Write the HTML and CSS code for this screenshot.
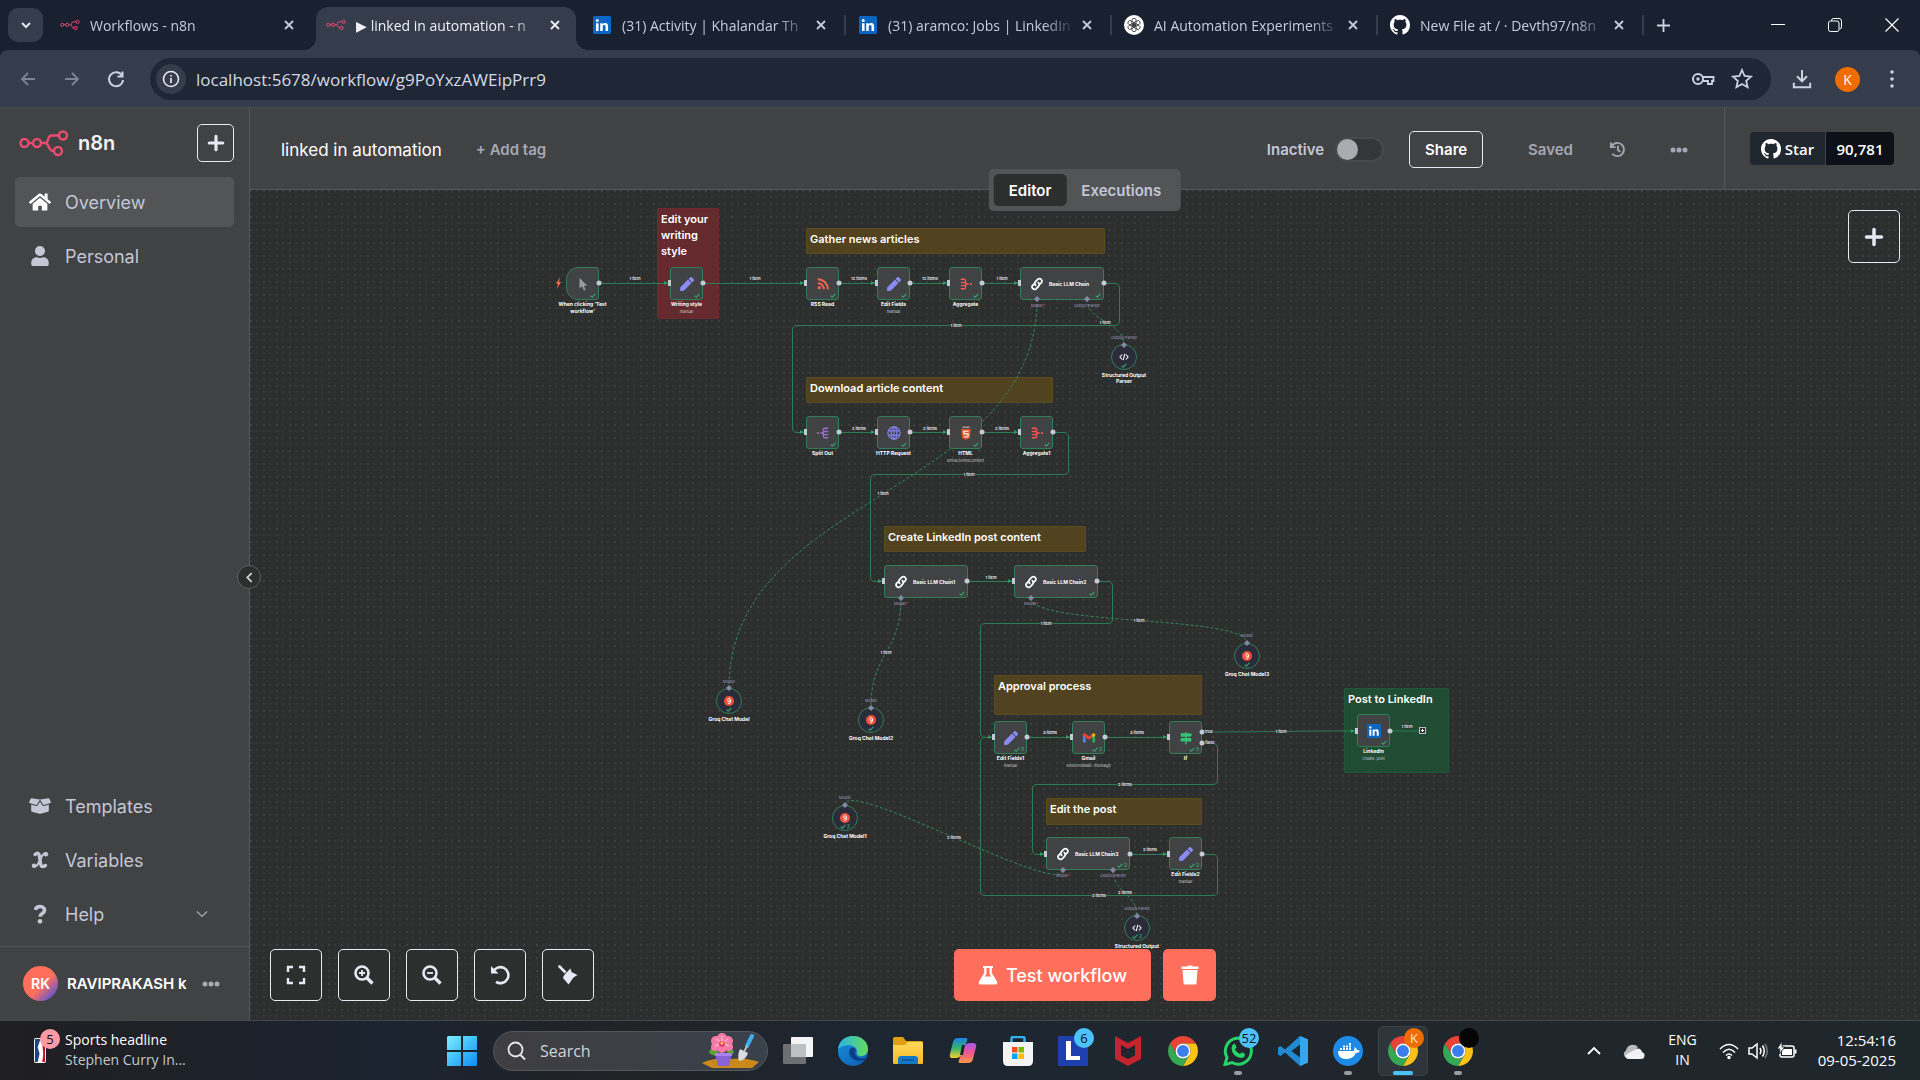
FILE: index.html
```html
<!DOCTYPE html>
<html lang="en">
<head>
<meta charset="utf-8">
<meta name="viewport" content="width=device-width, initial-scale=1">
<title>linked in automation - n8n</title>
<link rel="stylesheet" href="styles.css">
</head>
<body>
<svg class="sprite" aria-hidden="true">
  <defs>
    <linearGradient id="g-win" x1="0" y1="0" x2="1" y2="1"><stop offset="0" stop-color="#7df0ff"/><stop offset="1" stop-color="#0a8cf5"/></linearGradient>
    <linearGradient id="g-edge" x1="0" y1="0" x2="1" y2="0"><stop offset="0" stop-color="#2bb3e6"/><stop offset="1" stop-color="#62dc5c"/></linearGradient>
    <linearGradient id="g-edge2" x1="0" y1="0" x2="1" y2="1"><stop offset="0" stop-color="#1a90dc"/><stop offset="1" stop-color="#0b5bb0"/></linearGradient>
    <linearGradient id="g-folder" x1="0" y1="0" x2="0" y2="1"><stop offset="0" stop-color="#ffd95a"/><stop offset="1" stop-color="#f9b825"/></linearGradient>
    <linearGradient id="g-cop1" x1="0" y1="0" x2="0" y2="1"><stop offset="0" stop-color="#1e7fe8"/><stop offset=".5" stop-color="#35b36d"/><stop offset="1" stop-color="#f7cf2c"/></linearGradient>
    <linearGradient id="g-cop2" x1="0" y1="0" x2="0" y2="1"><stop offset="0" stop-color="#a559ee"/><stop offset=".5" stop-color="#f2578c"/><stop offset="1" stop-color="#fb9a45"/></linearGradient>
    <symbol id="n8n" viewBox="0 0 50 27"><g fill="none" stroke="#ea4b71" stroke-width="2.400"><circle cx="5.500" cy="13" r="4"/><circle cx="18" cy="13" r="4"/><circle cx="44" cy="5.500" r="4"/><circle cx="39" cy="21" r="4"/><path d="M9.500 13H14M22 13H26C31 13 27 5.500 33 5.500H40M26 13C31 13 28 21 35 21"/></g></symbol>
    <symbol id="linkedin" viewBox="0 0 24 24"><rect width="24" height="24" rx="2" fill="#0a66c2"/><path fill="#fff" d="M4 9.500h3.400V20H4zM5.700 4a2 2 0 1 1 0 4 2 2 0 0 1 0-4zM9.600 9.500h3.200V11c.6-1 1.700-1.800 3.300-1.800 3.300 0 4 2.200 4 5V20h-3.400v-5.200c0-1.300 0-2.800-1.700-2.800S13 13.300 13 14.700V20H9.600z"/></symbol>
    <symbol id="github" viewBox="0 0 16 16"><path fill="currentColor" d="M8 0C3.580 0 0 3.580 0 8c0 3.540 2.290 6.530 5.470 7.590.4.070.55-.17.55-.38 0-.19-.01-.82-.01-1.490-2.010.37-2.530-.49-2.690-.94-.09-.23-.48-.94-.82-1.130-.28-.15-.68-.52-.01-.53.63-.01 1.080.58 1.230.82.72 1.210 1.870.87 2.330.66.070-.52.28-.87.51-1.070-1.780-.2-3.640-.89-3.640-3.950 0-.87.31-1.590.82-2.150-.08-.2-.36-1.020.08-2.120 0 0 .67-.21 2.200.82.64-.18 1.320-.27 2-.27s1.360.09 2 .27c1.530-1.040 2.200-.82 2.200-.82.44 1.100.16 1.920.08 2.120.51.56.82 1.270.82 2.150 0 3.070-1.870 3.750-3.650 3.950.29.25.54.73.54 1.480 0 1.070-.01 1.930-.01 2.200 0 .21.15.46.55.38A8.010 8.010 0 0 0 16 8c0-4.420-3.580-8-8-8z"/></symbol>
    <symbol id="gpt" viewBox="0 0 24 24"><circle cx="12" cy="12" r="12" fill="#fff"/><g fill="none" stroke="#333" stroke-width="1"><rect id="lobe" x="9.500" y="4" width="5" height="9" rx="2.500"/><use href="#lobe" transform="rotate(60 12 12)"/><use href="#lobe" transform="rotate(120 12 12)"/><use href="#lobe" transform="rotate(180 12 12)"/><use href="#lobe" transform="rotate(240 12 12)"/><use href="#lobe" transform="rotate(300 12 12)"/></g></symbol>
    <symbol id="x" viewBox="0 0 18 18"><path d="M5 5l8 8M13 5l-8 8" stroke="currentColor" stroke-width="1.800" fill="none"/></symbol>
    <symbol id="plus" viewBox="0 0 16 16"><path d="M8 2V14M2 8H14" stroke="currentColor" stroke-width="2.800" stroke-linecap="round" fill="none"/></symbol>
    <symbol id="dots" viewBox="0 0 18 6"><g fill="currentColor"><circle cx="3" cy="3" r="2.500"/><circle cx="9" cy="3" r="2.500"/><circle cx="15" cy="3" r="2.500"/></g></symbol>
    <symbol id="home" viewBox="0 0 576 512"><path fill="currentColor" d="M280.370 148.260L96 300.110V464a16 16 0 0 0 16 16l112.060-.29a16 16 0 0 0 15.920-16V368a16 16 0 0 1 16-16h64a16 16 0 0 1 16 16v95.640a16 16 0 0 0 16 16.050L464 480a16 16 0 0 0 16-16V300L295.670 148.260a12.190 12.190 0 0 0-15.300 0zM571.600 251.470L488 182.560V44.050a12 12 0 0 0-12-12h-56a12 12 0 0 0-12 12v72.610L318.470 43a48 48 0 0 0-61 0L4.340 251.470a12 12 0 0 0-1.600 16.900l25.500 31A12 12 0 0 0 45.150 301l235.220-193.740a12.190 12.190 0 0 1 15.300 0L530.900 301a12 12 0 0 0 16.900-1.600l25.500-31a12 12 0 0 0-1.700-16.930z"/></symbol>
    <symbol id="user" viewBox="0 0 448 512"><path fill="currentColor" d="M224 256c70.700 0 128-57.300 128-128S294.700 0 224 0 96 57.300 96 128s57.300 128 128 128zm89.600 32h-16.700c-22.200 10.200-46.900 16-72.900 16s-50.600-5.800-72.900-16h-16.700C60.200 288 0 348.200 0 422.400V464c0 26.500 21.500 48 48 48h352c26.500 0 48-21.500 48-48v-41.600c0-74.200-60.200-134.400-134.400-134.400z"/></symbol>
    <symbol id="box" viewBox="0 0 640 512"><path fill="currentColor" d="M425.700 256c-16.900 0-32.800-9-41.400-23.400L320 126l-64.200 106.600c-8.700 14.500-24.600 23.500-41.500 23.500-4.500 0-9-.6-13.300-1.900L64 215v178c0 14.700 10 27.500 24.200 31l216.200 54.100c10.200 2.500 20.900 2.500 31 0L551.800 424c14.200-3.600 24.200-16.400 24.200-31V215l-137 39.100c-4.300 1.300-8.800 1.900-13.300 1.900zm212.600-112.200L586.800 41c-3.100-6.200-9.800-9.800-16.700-8.900L320 64l91.700 152.100c3.800 6.300 11.400 9.300 18.500 7.300l197.900-56.500c9.900-2.900 14.700-13.900 10.200-23.100zM53.200 41L1.700 143.800c-4.600 9.200.3 20.200 10.100 23l197.900 56.500c7.100 2 14.700-1 18.500-7.300L320 64 69.800 32.100c-6.900-.8-13.500 2.700-16.600 8.900z"/></symbol>
    <symbol id="varx" viewBox="0 0 20 20"><path fill="none" stroke="currentColor" stroke-width="3.400" stroke-linecap="round" d="M5 4.500C9 1 9.500 5 10 10S11 18.500 15.500 15.500"/><path fill="none" stroke="currentColor" stroke-width="2.200" stroke-linecap="round" d="M16 3.500C12.500 3 11.500 7 10 10S7.500 17 4 16.500"/><circle cx="16" cy="4.200" r="2.200" fill="currentColor"/><circle cx="4" cy="15.800" r="2.200" fill="currentColor"/></symbol>
    <symbol id="help" viewBox="0 0 20 22"><path d="M5 6.500C6 1.500 15 1.500 15 7 15 10.500 10 10.500 10 14" fill="none" stroke="currentColor" stroke-width="4"/><circle cx="10" cy="19" r="2.600" fill="currentColor"/></symbol>
    <symbol id="pen" viewBox="0 0 512 512"><path fill="#8b8bf5" d="M290.740 93.240l128.020 128.020-277.990 277.990-114.140 12.600C11.350 513.540-1.560 500.620.14 485.340l12.700-114.220 277.900-277.880zm207.200-19.060l-60.110-60.110c-18.750-18.750-49.160-18.750-67.910 0l-56.550 56.550 128.020 128.020 56.550-56.550c18.750-18.760 18.750-49.160 0-67.910z"/></symbol>
    <symbol id="cursor" viewBox="0 0 16 16"><path fill="#9a9b9e" d="M4 1V13L7 10.500 9 15.500 11 14.500 9 10H13Z"/></symbol>
    <symbol id="rss" viewBox="0 0 16 16"><g fill="none" stroke="#f4694f" stroke-width="2.200"><path d="M2 7A7 7 0 0 1 9 14M2 2.500A11.500 11.500 0 0 1 13.500 14"/></g><circle cx="3.800" cy="12.200" r="1.900" fill="#f4694f"/></symbol>
    <symbol id="agg" viewBox="0 0 16 16"><g fill="none" stroke="#f4594f" stroke-width="1.600"><path d="M2 2.500H6Q7.500 2.500 7.500 4V12Q7.500 13.500 6 13.500H2M2 6.200H7M2 9.800H7M8 8H11M12.500 8H15"/></g></symbol>
    <symbol id="split" viewBox="0 0 16 16"><g fill="none" stroke="#9b6dd5" stroke-width="1.600"><path d="M14 2.500H10Q8.500 2.500 8.500 4V12Q8.500 13.500 10 13.500H14M14 6.200H9M14 9.800H9M8 8H5M3.500 8H1"/></g></symbol>
    <symbol id="globe" viewBox="0 0 16 16"><g fill="none" stroke="#8582f0" stroke-width="1.300"><circle cx="8" cy="8" r="7"/><ellipse cx="8" cy="8" rx="3.200" ry="7"/><path d="M8 1V15M1.500 5.500H14.500M1.500 10.500H14.500"/></g></symbol>
    <symbol id="html5" viewBox="0 0 16 16"><path fill="#e65127" d="M2.500 3.500H13.500L12.500 14 8 15.800 3.500 14Z"/><path fill="#f4ded6" d="M4 .8h8v1H4z"/><path d="M11 6H5.500L5.800 9H10.500L10.200 12 8 12.800 5.800 12" fill="none" stroke="#fff" stroke-width="1.300"/></symbol>
    <symbol id="link" viewBox="0 0 16 16"><g fill="none" stroke="#fff" stroke-width="2" stroke-linecap="round"><path d="M6.500 9.500C5 8 5.200 6.500 6.300 5.300L9 2.500C11.500.5 15 3.500 13 6.500L11.500 8"/><path d="M9.500 6.500C11 8 10.800 9.500 9.700 10.700L7 13.500C4.500 15.500 1 12.500 3 9.500L4.500 8"/></g></symbol>
    <symbol id="gmail" viewBox="0 0 16 16"><path fill="#4285f4" d="M1 4V13H4.200V6Z"/><path fill="#34a853" d="M15 4V13H11.800V6Z"/><path fill="#ea4335" d="M1 3.500Q2.500 2 4.200 3.200L8 6.200 11.800 3.200V7L8 10 1 5Z"/><path fill="#fbbc04" d="M11.800 3.200Q13.500 2 15 3.500V5L11.800 7.300Z"/></symbol>
    <symbol id="signs" viewBox="0 0 16 16"><g fill="#36c275"><path d="M7.200 1H8.800V15H7.200z"/><path d="M2 2.500H13L15 4.500 13 6.500H2zM14 8H3L1 10 3 12H14z"/></g></symbol>
    <symbol id="code" viewBox="0 0 16 16"><path fill="none" stroke="#fff" stroke-width="1.700" d="M5 4L1.500 8 5 12M11 4L14.500 8 11 12M9.300 3L6.700 13"/></symbol>
    <symbol id="groq" viewBox="0 0 16 16"><circle cx="8" cy="8" r="8" fill="#f0533c"/><circle cx="8" cy="6.500" r="2.300" fill="none" stroke="#fff" stroke-width="1.400"/><path d="M10.300 6.500V9.500Q10 12 8 12 6.500 12 5.800 10.800" fill="none" stroke="#fff" stroke-width="1.400"/></symbol>
    <symbol id="tick" viewBox="0 0 6 5"><path d="M.6 2.600L2.200 4.200 5.400.8" fill="none" stroke="#31a76a" stroke-width="1.100"/></symbol>
    <symbol id="chrome" viewBox="0 0 48 48"><path fill="#ea4335" d="M24 12H44.780A24 24 0 0 0 3.220 12L13.610 30A12 12 0 0 1 24 12Z"/><path fill="#fbc116" d="M34.390 30L24 48A24 24 0 0 0 44.780 12H24A12 12 0 0 1 34.390 30Z"/><path fill="#34a853" d="M13.610 30L3.220 12A24 24 0 0 0 24 48L34.390 30A12 12 0 0 1 13.610 30Z"/><circle cx="24" cy="24" r="12" fill="#fff"/><circle cx="24" cy="24" r="9.500" fill="#3b7ded"/></symbol>
    <g id="in"><rect x="-2" y="-3" width="3" height="6" fill="#c3c9d5"/><path d="M-6-2L-2 0-6 2Z" fill="#2a9c62"/></g>
    <circle id="out" r="2.500" fill="#c3c9d5"/>
    <path id="dia" d="M0-3L3 0 0 3-3 0Z" fill="#8688a3"/>
  </defs>
</svg>

<header class="browser">
  <div class="tabstrip">
    <button class="tabsearch" aria-label="Search tabs"><svg viewBox="0 0 12 12"><path d="M2 4L6 8 10 4" fill="none" stroke="#dfe5ee" stroke-width="2"/></svg></button>
    <div class="tab nosep"><svg class="fav"><use href="#n8n"/></svg><span>Workflows - n8n</span><button aria-label="Close tab"><svg><use href="#x"/></svg></button></div>
    <div class="tab active nosep"><svg class="fav"><use href="#n8n"/></svg><span>▶ linked in automation - n</span><button aria-label="Close tab"><svg><use href="#x"/></svg></button></div>
    <div class="tab"><svg class="fav small"><use href="#linkedin"/></svg><span>(31) Activity | Khalandar Th</span><button aria-label="Close tab"><svg><use href="#x"/></svg></button></div>
    <div class="tab"><svg class="fav small"><use href="#linkedin"/></svg><span>(31) aramco: Jobs | LinkedIn</span><button aria-label="Close tab"><svg><use href="#x"/></svg></button></div>
    <div class="tab"><svg class="fav"><use href="#gpt"/></svg><span>AI Automation Experiments</span><button aria-label="Close tab"><svg><use href="#x"/></svg></button></div>
    <div class="tab"><svg class="fav"><use href="#github"/></svg><span>New File at / · Devth97/n8n</span><button aria-label="Close tab"><svg><use href="#x"/></svg></button></div>
    <button class="newtab" aria-label="New tab"><svg viewBox="0 0 14 14"><path d="M7 0V14M0 7H14" stroke="#c9d3e0" stroke-width="2"/></svg></button>
    <div class="winbtns">
      <button aria-label="Minimize"><svg viewBox="0 0 14 14"><path d="M0 6.500H14" stroke="#fff"/></svg></button>
      <button aria-label="Restore"><svg viewBox="0 0 14 14"><path d="M3.500 3V2.500Q3.500.5 5.500.5H11Q13.500.5 13.500 3V9Q13.500 11 11.500 11" fill="none" stroke="#fff"/><rect x=".5" y="3" width="10.500" height="10.500" rx="2" fill="none" stroke="#fff"/></svg></button>
      <button aria-label="Close window"><svg viewBox="0 0 14 14"><path d="M.5.5L13.500 13.500M13.500.5L.5 13.500" stroke="#fff" stroke-width="1.200"/></svg></button>
    </div>
  </div>
  <div class="toolbar">
    <button class="dim" aria-label="Back"><svg viewBox="0 0 20 20"><path d="M17 10H4M10 4L4 10 10 16" fill="none" stroke="currentColor" stroke-width="1.800"/></svg></button>
    <button class="dim" aria-label="Forward"><svg viewBox="0 0 20 20"><path d="M3 10H16M10 4L16 10 10 16" fill="none" stroke="currentColor" stroke-width="1.800"/></svg></button>
    <button aria-label="Reload"><svg viewBox="0 0 20 20"><path d="M16 6.500A7 7 0 1 0 17 11M16.500 2.500V7.500H11.500" fill="none" stroke="currentColor" stroke-width="2"/></svg></button>
    <div class="omnibox">
      <button class="info" aria-label="Site information"><svg viewBox="0 0 18 18"><circle cx="9" cy="9" r="7.500" fill="none" stroke="#e3e8f0" stroke-width="1.600"/><path d="M9 8V13M9 5V6.500" stroke="#e3e8f0" stroke-width="1.700"/></svg></button>
      <input type="text" aria-label="Address" value="localhost:5678/workflow/g9PoYxzAWEipPrr9">
      <button aria-label="Passwords"><svg viewBox="0 0 24 24"><circle cx="7" cy="12" r="5" fill="none" stroke="currentColor" stroke-width="2"/><circle cx="7" cy="12" r="1.700" fill="currentColor"/><path d="M11.500 10H22.500V14H21V17H17V14H12" fill="none" stroke="currentColor" stroke-width="1.800"/></svg></button>
      <button aria-label="Bookmark"><svg viewBox="0 0 24 24"><path d="M12 3L14.600 9 21 9.600 16.200 13.900 17.600 20.300 12 17 6.400 20.300 7.800 13.900 3 9.600 9.400 9Z" fill="none" stroke="currentColor" stroke-width="1.800"/></svg></button>
    </div>
    <button class="dl" aria-label="Downloads"><svg viewBox="0 0 22 22"><path d="M11 1V13M5.500 8L11 13.500 16.500 8M2 15V20H20V15" fill="none" stroke="currentColor" stroke-width="2.200"/></svg></button>
    <button class="profile" aria-label="Profile">K</button>
    <button class="kebab" aria-label="Menu"><svg viewBox="0 0 20 20"><g fill="currentColor"><circle cx="10" cy="3" r="1.800"/><circle cx="10" cy="10" r="1.800"/><circle cx="10" cy="17" r="1.800"/></g></svg></button>
  </div>
</header>

<div class="app">
  <aside class="sidebar">
    <div class="brand"><svg class="logo"><use href="#n8n"/></svg><b>n8n</b><button class="ghost" aria-label="Create"><svg><use href="#plus"/></svg></button></div>
    <nav>
      <a href="#overview" class="current"><svg><use href="#home"/></svg>Overview</a>
      <a href="#personal"><svg><use href="#user"/></svg>Personal</a>
    </nav>
    <nav class="lower">
      <a href="#templates"><svg><use href="#box"/></svg>Templates</a>
      <a href="#variables"><svg><use href="#varx"/></svg>Variables</a>
      <a href="#help"><svg><use href="#help"/></svg>Help<svg class="chev" viewBox="0 0 12 8"><path d="M1 1.500L6 6.500 11 1.500" fill="none" stroke="#a9abb0" stroke-width="1.200"/></svg></a>
    </nav>
    <div class="me"><span class="avatar">RK</span><span class="name">RAVIPRAKASH k</span><button aria-label="User menu"><svg><use href="#dots"/></svg></button></div>
    <button class="collapse" aria-label="Collapse sidebar"><svg viewBox="0 0 10 10"><path d="M7 1L3 5 7 9" fill="none" stroke="#d5d7dc" stroke-width="1.600"/></svg></button>
  </aside>

  <main>
    <div class="topbar">
      <h1>linked in automation</h1>
      <button class="addtag">+ Add tag</button>
      <label class="toggle">Inactive<input type="checkbox"></label>
      <button class="ghost share">Share</button>
      <span class="saved">Saved</span>
      <button class="icon history" aria-label="History"><svg viewBox="0 0 18 18"><path d="M2.800 5.500A7 7 0 1 1 3.500 13.500M2 1.500V6.500H7M9.500 5V9.500L12 11.500" fill="none" stroke="currentColor" stroke-width="2"/></svg></button>
      <button class="icon more" aria-label="More"><svg><use href="#dots"/></svg></button>
      <div class="gh"><a href="#star" class="star"><svg><use href="#github"/></svg>Star</a><a href="#count" class="count">90,781</a></div>
      <div class="views"><button class="on">Editor</button><button>Executions</button></div>
    </div>

    <div class="canvas">
      <div class="world">
        <section class="sticky red" style="left:657px;top:208px;width:62px;height:111px">Edit your writing style</section>
        <section class="sticky" style="left:806px;top:228px;width:299px;height:26px">Gather news articles</section>
        <section class="sticky" style="left:806px;top:377px;width:247px;height:26px">Download article content</section>
        <section class="sticky" style="left:884px;top:526px;width:202px;height:26px">Create LinkedIn post content</section>
        <section class="sticky" style="left:994px;top:675px;width:208px;height:40px">Approval process</section>
        <section class="sticky green" style="left:1344px;top:688px;width:105px;height:85px">Post to LinkedIn</section>
        <section class="sticky" style="left:1046px;top:798px;width:156px;height:27px">Edit the post</section>

        <svg class="edges" viewBox="0 0 1920 1080">
          <g class="solid">
            <path d="M599 283.500H668M703 283.500H804M839 283.500H876M910 283.500H947M982 283.500H1018"/>
            <path d="M1104 283.500H1115Q1119.500 283.500 1119.500 288V321Q1119.500 325.500 1115 325.500H797Q792.500 325.500 792.500 330V428Q792.500 432.500 797 432.500H804"/>
            <path d="M839 432.500H876M910 432.500H947M982 432.500H1018"/>
            <path d="M1053 432.500H1064Q1068.500 432.500 1068.500 437V470Q1068.500 474.500 1064 474.500H875Q870.500 474.500 870.500 479V577Q870.500 581.500 875 581.500H882M967 581.500H1012"/>
            <path d="M1097 581.500H1108Q1112.500 581.500 1112.500 586V619Q1112.500 623.500 1108 623.500H985Q980.500 623.500 980.500 628V733Q980.500 737.500 985 737.500H992M1027 737.500H1070M1105 737.500H1167"/>
            <path d="M1202 732C1260 732 1290 731 1355 731"/>
            <path d="M1202 743.500H1213Q1217.500 743.500 1217.500 748V780Q1217.500 784.500 1213 784.500H1037Q1032.500 784.500 1032.500 789V850Q1032.500 854.500 1037 854.500H1044M1130 854.500H1167M1390 731H1419"/>
            <path d="M1202 854.500H1213Q1217.500 854.500 1217.500 859V891Q1217.500 895.500 1213 895.500H985Q980.500 895.500 980.500 891V742Q980.500 737.500 985 737.500"/>
          </g>
          <g class="dashed">
            <path d="M1037 299C1037 494 729 494 729 688"/>
            <path d="M1087 299C1087 322 1124 322 1124 345"/>
            <path d="M901 598C901 653 871 653 871 707"/>
            <path d="M1031 598C1031 626 1247 615 1247 643"/>
            <path d="M1063 870C1063 899 845 776 845 805"/>
            <path d="M1113 870C1113 893 1137 893 1137 916"/>
          </g>
          <rect x="1419.500" y="727.500" width="6" height="6" fill="#2d2e2e" stroke="#b9bcc4"/><path d="M1422.500 729V732M1421 730.500H1424" stroke="#fff"/>
          <path d="M560 277L556 284H558L557 289 561 282H559Z" fill="#f4694f"/>
        </svg>

        <article class="node trigger" style="left:566px;top:267px"><svg><use href="#cursor"/></svg><i><svg><use href="#tick"/></svg></i><p>When clicking ‘Test workflow’</p></article>
        <article class="node" style="left:670px;top:267px"><svg><use href="#pen"/></svg><i><svg><use href="#tick"/></svg></i><p>Writing style<small>manual</small></p></article>
        <article class="node" style="left:806px;top:267px"><svg><use href="#rss"/></svg><i><svg><use href="#tick"/></svg></i><p>RSS Read</p></article>
        <article class="node" style="left:877px;top:267px"><svg><use href="#pen"/></svg><i><svg><use href="#tick"/></svg></i><p>Edit Fields<small>manual</small></p></article>
        <article class="node" style="left:949px;top:267px"><svg><use href="#agg"/></svg><i><svg><use href="#tick"/></svg></i><p>Aggregate</p></article>
        <article class="node wide" style="left:1020px;top:267px"><svg><use href="#link"/></svg><b>Basic LLM Chain</b><i><svg><use href="#tick"/></svg></i></article>

        <article class="node" style="left:806px;top:416px"><svg><use href="#split"/></svg><i><svg><use href="#tick"/></svg></i><p>Split Out</p></article>
        <article class="node" style="left:877px;top:416px"><svg><use href="#globe"/></svg><i><svg><use href="#tick"/></svg></i><p>HTTP Request</p></article>
        <article class="node" style="left:949px;top:416px"><svg><use href="#html5"/></svg><i><svg><use href="#tick"/></svg></i><p>HTML<small>extractHtmlContent</small></p></article>
        <article class="node" style="left:1020px;top:416px"><svg><use href="#agg"/></svg><i><svg><use href="#tick"/></svg></i><p>Aggregate1</p></article>

        <article class="node wide" style="left:884px;top:565px"><svg><use href="#link"/></svg><b>Basic LLM Chain1</b><i><svg><use href="#tick"/></svg></i></article>
        <article class="node wide" style="left:1014px;top:565px"><svg><use href="#link"/></svg><b>Basic LLM Chain2</b><i><svg><use href="#tick"/></svg></i></article>

        <article class="node" style="left:994px;top:721px"><svg><use href="#pen"/></svg><i><svg><use href="#tick"/></svg>3</i><p>Edit Fields1<small>manual</small></p></article>
        <article class="node" style="left:1072px;top:721px"><svg><use href="#gmail"/></svg><i><svg><use href="#tick"/></svg>3</i><p>Gmail<small>sendAndWait: message</small></p></article>
        <article class="node" style="left:1169px;top:721px"><svg><use href="#signs"/></svg><i><svg><use href="#tick"/></svg>3</i><p>If</p></article>
        <article class="node" style="left:1357px;top:714px"><svg><use href="#linkedin"/></svg><i><svg><use href="#tick"/></svg></i><p>LinkedIn<small>create: post</small></p></article>

        <article class="node wide" style="left:1046px;top:837px"><svg><use href="#link"/></svg><b>Basic LLM Chain3</b><i><svg><use href="#tick"/></svg>2</i></article>
        <article class="node" style="left:1169px;top:837px"><svg><use href="#pen"/></svg><i><svg><use href="#tick"/></svg>2</i><p>Edit Fields2<small>manual</small></p></article>

        <article class="node sub" style="left:1111px;top:344px"><svg><use href="#code"/></svg><i><svg><use href="#tick"/></svg></i><p>Structured Output Parser</p></article>
        <article class="node sub" style="left:716px;top:688px"><svg><use href="#groq"/></svg><i><svg><use href="#tick"/></svg></i><p>Groq Chat Model</p></article>
        <article class="node sub" style="left:858px;top:707px"><svg><use href="#groq"/></svg><i><svg><use href="#tick"/></svg></i><p>Groq Chat Model2</p></article>
        <article class="node sub" style="left:1234px;top:643px"><svg><use href="#groq"/></svg><i><svg><use href="#tick"/></svg></i><p>Groq Chat Model3</p></article>
        <article class="node sub" style="left:832px;top:805px"><svg><use href="#groq"/></svg><i><svg><use href="#tick"/></svg>2</i><p>Groq Chat Model1</p></article>
        <article class="node sub" style="left:1124px;top:915px"><svg><use href="#code"/></svg><i><svg><use href="#tick"/></svg>2</i><p>Structured Output</p></article>

        <svg class="edges" viewBox="0 0 1920 1080">
          <use href="#in" x="670" y="283"/><use href="#in" x="806" y="283"/><use href="#in" x="877" y="283"/><use href="#in" x="949" y="283"/><use href="#in" x="1020" y="283"/>
          <use href="#in" x="806" y="432"/><use href="#in" x="877" y="432"/><use href="#in" x="949" y="432"/><use href="#in" x="1020" y="432"/>
          <use href="#in" x="884" y="581"/><use href="#in" x="1014" y="581"/>
          <use href="#in" x="994" y="737"/><use href="#in" x="1072" y="737"/><use href="#in" x="1169" y="737"/><use href="#in" x="1357" y="731"/>
          <use href="#in" x="1046" y="854"/><use href="#in" x="1169" y="854"/>
          <use href="#out" x="599" y="283"/><use href="#out" x="703" y="283"/><use href="#out" x="839" y="283"/><use href="#out" x="910" y="283"/><use href="#out" x="982" y="283"/><use href="#out" x="1104" y="283"/>
          <use href="#out" x="839" y="432"/><use href="#out" x="910" y="432"/><use href="#out" x="982" y="432"/><use href="#out" x="1053" y="432"/>
          <use href="#out" x="967" y="581"/><use href="#out" x="1097" y="581"/>
          <use href="#out" x="1027" y="737"/><use href="#out" x="1105" y="737"/><use href="#out" x="1202" y="732"/><use href="#out" x="1202" y="743"/><use href="#out" x="1390" y="731"/>
          <use href="#out" x="1130" y="854"/><use href="#out" x="1202" y="854"/>
          <use href="#dia" x="1037" y="299"/><use href="#dia" x="1087" y="299"/><use href="#dia" x="1124" y="345"/><use href="#dia" x="901" y="598"/><use href="#dia" x="1031" y="598"/>
          <use href="#dia" x="729" y="688"/><use href="#dia" x="871" y="708"/><use href="#dia" x="1247" y="643"/><use href="#dia" x="845" y="805"/><use href="#dia" x="1063" y="870"/><use href="#dia" x="1113" y="870"/><use href="#dia" x="1137" y="916"/>
          <g class="count-labels">
            <text x="635" y="280">1 item</text><text x="755" y="280">1 item</text><text x="859" y="280">12 items</text><text x="930" y="280">12 items</text><text x="1002" y="280">1 item</text>
            <text x="956" y="327">1 item</text><text x="1105" y="324">1 item</text>
            <text x="859" y="430">2 items</text><text x="930" y="430">2 items</text><text x="1002" y="430">2 items</text>
            <text x="969" y="476">1 item</text><text x="883" y="495">1 item</text>
            <text x="991" y="579">1 item</text><text x="1046" y="625">1 item</text><text x="1139" y="622">1 item</text><text x="886" y="654">1 item</text>
            <text x="1050" y="734">3 items</text><text x="1137" y="734">3 items</text><text x="1281" y="733">1 item</text><text x="1407" y="728">1 item</text>
            <text x="1209" y="733">true</text><text x="1210" y="744">false</text>
            <text x="1125" y="786">2 items</text><text x="954" y="839">2 items</text><text x="1150" y="851">2 items</text><text x="1099" y="897">2 items</text><text x="1125" y="894">2 items</text>
          </g>
          <g class="port-labels">
            <text x="1038" y="307">Model<tspan>*</tspan></text><text x="1087" y="307">Output Parser</text><text x="1124" y="339">Output Parser</text>
            <text x="901" y="605">Model<tspan>*</tspan></text><text x="1031" y="605">Model<tspan>*</tspan></text>
            <text x="729" y="683">Model</text><text x="871" y="702">Model</text><text x="1247" y="637">Model</text><text x="845" y="799">Model</text>
            <text x="1063" y="877">Model<tspan>*</tspan></text><text x="1113" y="877">Output Parser</text><text x="1137" y="910">Output Parser</text>
          </g>
        </svg>
      </div>

      <button class="ghost addnode" aria-label="Add node"><svg><use href="#plus"/></svg></button>
      <div class="controls">
        <button class="ghost" aria-label="Fit view"><svg viewBox="0 0 20 20"><path d="M2 7V2H7M13 2H18V7M18 13V18H13M7 18H2V13" fill="none" stroke="currentColor" stroke-width="2.400"/></svg></button>
        <button class="ghost" aria-label="Zoom in"><svg viewBox="0 0 20 20"><circle cx="8" cy="8" r="6.500" fill="none" stroke="currentColor" stroke-width="2.600"/><path d="M13 13L18.500 18.500" stroke="currentColor" stroke-width="3.400"/><path d="M8 5V11M5 8H11" stroke="currentColor" stroke-width="1.800"/></svg></button>
        <button class="ghost" aria-label="Zoom out"><svg viewBox="0 0 20 20"><circle cx="8" cy="8" r="6.500" fill="none" stroke="currentColor" stroke-width="2.600"/><path d="M13 13L18.500 18.500" stroke="currentColor" stroke-width="3.400"/><path d="M5 8H11" stroke="currentColor" stroke-width="1.800"/></svg></button>
        <button class="ghost" aria-label="Reset zoom"><svg viewBox="0 0 20 20"><path d="M3 7A8 8 0 1 1 6 16.800" fill="none" stroke="currentColor" stroke-width="2.600"/><path d="M1 1V8.500H8.500Z" fill="currentColor"/></svg></button>
        <button class="ghost" aria-label="Tidy up"><svg viewBox="0 0 20 20"><path d="M1.500 1.500L8 8" stroke="currentColor" stroke-width="2.600" stroke-linecap="round"/><path d="M12.500 3.500L13.500 7 19.500 10 15.500 12.500 10.500 19.500 5 13 6 9.500Z" fill="currentColor"/><path d="M5 11L11 4" stroke="#2d2e2e"/></svg></button>
      </div>
      <div class="run">
        <button class="test"><svg viewBox="0 0 20 20"><path d="M5 1H15V3H13.800V8L19 16.500Q20 19 17.500 19.500H2.500Q0 19 1 16.500L6.200 8V3H5ZM8.500 3V8.700L6.800 11.500H13.200L11.500 8.700V3Z" fill="currentColor" fill-rule="evenodd"/></svg>Test workflow</button>
        <button aria-label="Clear execution"><svg viewBox="0 0 20 20"><path d="M1.500 1.500H7L8 .5H12L13 1.500H18.500V4H1.500ZM2.500 5H17.500L16.500 18Q16.400 19.500 15 19.500H5Q3.600 19.500 3.500 18Z" fill="currentColor"/></svg></button>
      </div>
    </div>
  </main>
</div>

<footer class="taskbar">
  <div class="widget">
    <span class="nba"><svg viewBox="0 0 13 27"><rect width="13" height="27" rx="2" fill="#fff"/><path d="M1 1H7L4 10 6 17 4 26H1Z" fill="#1d428a"/><path d="M9 6L12 9V26H9L10 17Z" fill="#c8102e"/></svg><em>5</em></span>
    <p>Sports headline<span>Stephen Curry In...</span></p>
  </div>
  <div class="dock">
    <button aria-label="Start"><svg viewBox="0 0 30 30"><path fill="url(#g-win)" d="M1 0H14V14H0V1ZM16 0H30V14H16ZM0 16H14V30H0ZM16 16H30V30H16Z"/></svg></button>
    <label class="search"><svg class="mag" viewBox="0 0 20 20"><circle cx="8.500" cy="8.500" r="7" fill="none" stroke="#e4e6e8" stroke-width="1.800"/><path d="M13.500 14L18 18.500" stroke="#e4e6e8" stroke-width="2"/></svg><input type="text" placeholder="Search" aria-label="Search"><svg class="art" viewBox="0 0 57 36"><path d="M0 30Q12 24 28 26 44 24 57 29L50 35H10Z" fill="#c98a1b"/><path d="M7 19Q9 13 15 17L18 22Q10 24 7 19ZM24 18Q32 14 32 20L27 22Z" fill="#59a234"/><g fill="#f67ba4"><circle cx="14" cy="8" r="5"/><circle cx="26" cy="8" r="5"/><circle cx="27" cy="14" r="4"/><circle cx="13" cy="14" r="4"/><circle cx="20" cy="5" r="5"/><circle cx="20" cy="15" r="5"/></g><path d="M20 10L14 6M20 10L26 6M20 10L20 3M20 10L13 13M20 10L27 13" stroke="#fbb3c9" stroke-width="1.500"/><circle cx="20" cy="11" r="3" fill="#e53a70"/><circle cx="20" cy="10" r="1.500" fill="#fbd34b"/><path d="M13 20H30L27 33H16Z" fill="#8a62d8"/><path d="M13 20H30V23H13Z" fill="#a883ea"/><path d="M50 3L45 13" stroke="#41aef0" stroke-width="4" stroke-linecap="round"/><path d="M45 13L42 19" stroke="#bbb" stroke-width="2"/><path d="M38 16L46 20Q44 27 37 28Q35 22 38 16Z" fill="#d8dce0"/></svg></label>
    <button aria-label="Task view"><svg viewBox="0 0 30 30"><rect y="8" width="23" height="20" rx="1" fill="#6d6f72"/><rect x="8" y="1" width="22" height="20" rx="1" fill="#f4f4f4"/><path d="M8 8H23V21H8Z" fill="#bfc0c1"/></svg></button>
    <button aria-label="Edge"><svg viewBox="0 0 30 30"><circle cx="15" cy="15" r="15" fill="url(#g-edge2)"/><path d="M0 13C1 5 7 0 15 0 24 0 30 6 30 13 30 19 25 21 21 20 18 19 19 17 19 15 19 10 9 6 0 13Z" fill="url(#g-edge)"/><path d="M12 13C9 20 15 27 27 24 29 23 29 22 27 22 20 24 15 19 18 14Q15 10 12 13Z" fill="#0a3f87"/></svg></button>
    <button aria-label="File Explorer"><svg viewBox="0 0 30 30"><path d="M0 3Q0 1 2 1H10L13 5H28Q30 5 30 7V12H0Z" fill="#e0a00f"/><path d="M0 9H12L15 6H30V27Q30 28 29 28H1Q0 28 0 27Z" fill="url(#g-folder)"/><path d="M5 28V23Q5 20 8 20H22Q25 20 25 23V28Z" fill="#1279c9"/><path d="M9 24H21" stroke="#0b4f8f" stroke-width="1.500"/></svg></button>
    <button aria-label="Copilot"><svg viewBox="0 0 30 30"><path d="M10 2H18Q20 2 19 5L14 18Q12 22 8 22H4Q1 22 2 18L5 6Q6 2 10 2Z" fill="url(#g-cop1)"/><path d="M20 27H12Q10 27 11 24L16 11Q18 7 22 7H25Q29 7 28 11L25 23Q24 27 20 27Z" fill="url(#g-cop2)"/><path d="M14 9H17L15 19H12Z" fill="#20262d"/></svg></button>
    <button aria-label="Store"><svg viewBox="0 0 30 30"><path d="M8.500 7V2.500Q8.500 1 10 1H20Q21.500 1 21.500 2.500V7" fill="none" stroke="#31b4f3" stroke-width="2.400"/><path d="M0 6H30V25Q30 30 25 30H5Q0 30 0 25Z" fill="#f3f3f3"/><path d="M9 11H14.500V16.500H9Z" fill="#f25022"/><path d="M15.500 11H21V16.500H15.500Z" fill="#7fba00"/><path d="M9 17.500H14.500V23H9Z" fill="#00a4ef"/><path d="M15.500 17.500H21V23H15.500Z" fill="#ffb900"/></svg></button>
    <button aria-label="Lenovo"><svg viewBox="0 0 30 30"><rect width="30" height="30" fill="#1e3fae"/><path d="M8 5H13V20H22V24H8Z" fill="#fff"/></svg><em>6</em></button>
    <button aria-label="McAfee"><svg viewBox="0 0 30 30"><path d="M2 0L15 7 28 0V23L15 30 2 23Z" fill="#c3242d"/><path d="M8 9V19.500L15 23 22 19.500V9L15 13Z" fill="#20262d"/></svg></button>
    <button aria-label="Chrome"><svg><use href="#chrome"/></svg></button>
    <button class="open" aria-label="WhatsApp"><svg viewBox="0 0 30 30"><path d="M2 28.500L4 21.500A13 13 0 1 1 9 26.500Z" fill="none" stroke="#25d366" stroke-width="3"/><path d="M9.500 9Q11.500 6.500 12.500 9L13.500 11.500 12 13.500Q14 17 17 18L19 16.300 22 18Q22 22 18 22 9 20.500 8.500 12Z" fill="#25d366"/></svg><em>52</em></button>
    <button aria-label="VS Code"><svg viewBox="0 0 30 30"><path d="M22 0L30 3.500V26.500L22 30 7 16.500 2.500 20 0 18.500V11.500L2.500 10 7 13.500ZM22 8.500L13.500 15 22 21.500Z" fill="#1f8ad2" fill-rule="evenodd"/><path d="M22 0L30 3.500V26.500L22 30Z" fill="#35a6ee"/></svg></button>
    <button class="open" aria-label="Docker"><svg viewBox="0 0 30 30"><circle cx="15" cy="15" r="15" fill="#1d8ae8"/><path d="M5 15H21Q22 12 21 11 24 12 24 14 26 14 27 15 25.500 17 23 17 20 23 13 23 5 23 5 15Z" fill="#fff"/><path d="M7 12H9V14H7ZM10 12H12V14H10ZM13 12H15V14H13ZM16 12H18V14H16ZM10 9.500H12V11.500H10ZM13 9.500H15V11.500H13ZM16 9.500H18V11.500H16ZM16 7H18V9H16Z" fill="#fff"/></svg></button>
    <button class="open focus" aria-label="Chrome profile K"><svg><use href="#chrome"/></svg><em class="k">K</em></button>
    <button class="open" aria-label="Chrome profile"><svg><use href="#chrome"/></svg><em class="dark"></em></button>
  </div>
  <div class="tray">
    <button aria-label="Hidden icons"><svg viewBox="0 0 14 14"><path d="M1 10L7 4 13 10" fill="none" stroke="#fff" stroke-width="1.800"/></svg></button>
    <svg class="cloud" viewBox="0 0 22 16"><path d="M4 15A4 4 0 0 1 3 7.500 7 7 0 0 1 15 4Z" fill="#b9bcc0"/><path d="M5 16Q2 15 2.500 12L14 5.500Q18 5 19 9 22 10 21.500 13 21 16 18 16Z" fill="#f1f2f3"/></svg>
    <p class="lang">ENG<span>IN</span></p>
    <svg class="sys" viewBox="0 0 20 20"><g fill="none" stroke="#fff" stroke-width="1.600"><path d="M1 8Q10-1 19 8M4 11.500Q10 5 16 11.500M7 14.500Q10 11.500 13 14.500"/></g><circle cx="10" cy="16.500" r="1.700" fill="#fff"/></svg>
    <svg class="sys" viewBox="0 0 20 20"><g fill="none" stroke="#fff" stroke-width="1.500"><path d="M1 7H4L9 3V17L4 13H1ZM12 7Q14 10 12 13M14.500 4.500Q18 10 14.500 15.500"/><path d="M17 3Q21.500 10 17 17" stroke="#777"/></g></svg>
    <svg class="sys" viewBox="0 0 20 20"><rect x="3" y="5" width="14" height="11" rx="2" fill="none" stroke="#fff" stroke-width="1.500"/><path d="M5 8H15V14H5ZM17.500 8.500H19.500V12.500H17.500Z" fill="#fff"/><path d="M5 0L0 8H3L2 13 8 6H5Z" fill="#fff" stroke="#20262d"/></svg>
    <p class="clock">12:54:16<span>09-05-2025</span></p>
  </div>
</footer>
</body>
</html>
```
FILE: styles.css
```css
* { box-sizing: border-box; }
body {
  margin: 0;
  min-height: 100vh;
  display: flex;
  flex-direction: column;
  background: #2d2e2e;
  color: #e6e7ee;
  font-family: Inter, "Liberation Sans", sans-serif;
}
button, input { font: inherit; color: inherit; border: 0; padding: 0; background: none; }
button { display: flex; align-items: center; justify-content: center; }
a { color: inherit; text-decoration: none; }
p, h1 { margin: 0; }
.sprite { position: absolute; width: 0; height: 0; }

/* browser frame */
.browser { background: #19202f; font-family: "Open Sans", "Noto Sans", sans-serif; }
.tabstrip { display: flex; align-items: flex-start; height: 50px; padding-left: 8px; }
.tabsearch { width: 35px; height: 34px; margin: 8px 7px 0 0; border-radius: 10px; background: #353c4b; }
.tabsearch svg { width: 12px; height: 12px; }
.tab {
  position: relative;
  flex: 0 1 260px;
  min-width: 0;
  height: 43px;
  margin: 7px 6px 0 0;
  padding: 0 12px 7px 10px;
  display: flex;
  align-items: center;
  gap: 10px;
  color: #c3cddd;
  font-size: 14px;
  border-radius: 12px 12px 0 0;
}
.tab span {
  flex: 1;
  min-width: 0;
  overflow: hidden;
  white-space: nowrap;
  margin-right: -6px;
  -webkit-mask-image: linear-gradient(90deg, #000 calc(100% - 30px), transparent);
  mask-image: linear-gradient(90deg, #000 calc(100% - 30px), transparent);
}
.fav { width: 20px; height: 20px; flex: none; color: #fff; }
.fav.small { padding: 1px; }
.tab button svg { width: 18px; height: 18px; }
.tab::after { content: ""; position: absolute; right: -4px; top: 8px; width: 2px; height: 20px; background: #353c4b; }
.tab.nosep::after { display: none; }
.tab.active { background: #353c4b; color: #eef1f6; }
.tab.active::before, .tab.active::after {
  content: ""; display: block; position: absolute; top: auto; bottom: 0; width: 12px; height: 12px;
  background: radial-gradient(circle at 0 0, transparent 12px, #353c4b 12px);
}
.tab.active::before { left: -12px; }
.tab.active::after { right: -12px; background: radial-gradient(circle at 100% 0, transparent 12px, #353c4b 12px); }
.newtab { width: 34px; height: 34px; margin-top: 8px; }
.newtab svg { width: 13px; height: 13px; }
.winbtns { display: flex; margin-left: auto; }
.winbtns button { width: 57px; height: 50px; }
.winbtns svg { width: 14px; height: 14px; }
.toolbar {
  display: flex;
  align-items: center;
  height: 58px;
  padding: 1px 6px 0 6px;
  background: #353c4b;
  border-bottom: 1px solid #45474f;
  border-radius: 8px 8px 0 0;
  color: #c9d3e0;
}
.toolbar > button { width: 44px; height: 40px; }
.toolbar > button svg { width: 20px; height: 20px; }
.toolbar .dim { color: #7c8494; }
.omnibox {
  flex: 1;
  display: flex;
  align-items: center;
  gap: 15px;
  height: 42px;
  margin: 0 9px 0 12px;
  padding: 0 17px 0 6px;
  border-radius: 21px;
  background: #1f2636;
}
.omnibox .info { width: 30px; height: 30px; border-radius: 50%; background: #353c4b; }
.omnibox .info svg { width: 18px; height: 18px; }
.omnibox input { flex: 1; min-width: 0; margin-left: -5px; font-size: 17px; color: #d3dae4; }
.omnibox > button:not(.info) svg { width: 24px; height: 24px; }
.toolbar .profile { width: 25px; height: 25px; margin: 0 10px 0 11px; border-radius: 50%; background: #ef6c00; color: #fff; font-size: 14px; }

/* application shell */
.app { flex: 1; display: flex; min-height: 0; }
.sidebar {
  position: relative;
  z-index: 2;
  flex: none;
  width: 250px;
  display: flex;
  flex-direction: column;
  background: #414244;
  border-right: 1px solid #55575a;
}
.ghost { border: 1px solid #e6e9f4; border-radius: 5px; color: #e6e9f4; }
.brand { display: flex; align-items: center; padding: 16px 15px 15px 19px; }
.logo { width: 50px; height: 27px; }
.brand b { margin-left: 9px; font-size: 20px; font-weight: 600; color: #f2f2f6; }
.brand .ghost { width: 37px; height: 38px; margin-left: auto; }
.brand .ghost svg { width: 18px; height: 18px; }
nav { display: flex; flex-direction: column; gap: 4px; padding: 0 15px; }
nav a {
  display: flex;
  align-items: center;
  gap: 14px;
  height: 50px;
  padding: 0 14px;
  border-radius: 5px;
  color: #c3c7d6;
  font-size: 18px;
}
nav a svg { width: 22px; height: 20px; }
nav a.current { background: #525456; }
nav a.current svg { color: #fff; }
nav .chev { width: 12px; height: 8px; margin: 0 12px 0 auto; }
.lower { margin-top: auto; padding-bottom: 7px; }
.me { display: flex; align-items: center; height: 74px; padding: 0 29px 0 23px; border-top: 1px solid #525456; }
.avatar {
  display: flex; align-items: center; justify-content: center;
  width: 35px; height: 35px; border-radius: 50%;
  background: linear-gradient(135deg, #ff6f5c 55%, #6b57c8 85%);
  color: #fff; font-size: 14px; font-weight: 600;
}
.name { margin: 0 auto 0 9px; font-size: 15px; font-weight: 600; color: #fff; white-space: nowrap; }
.me svg { width: 18px; height: 6px; color: #a7a9b3; }
.collapse {
  position: absolute; right: -12px; top: 457px;
  width: 24px; height: 24px; border: 1px solid #5c5e61; border-radius: 50%; background: #2d2e2e;
}
.collapse svg { width: 11px; height: 11px; }
main { flex: 1; min-width: 0; display: flex; flex-direction: column; }
.topbar {
  position: relative;
  z-index: 1;
  flex: none;
  display: flex;
  align-items: center;
  height: 82px;
  padding: 2px 0 0 31px;
  background: #414244;
  border-bottom: 1px solid #55575a;
  color: #a4a8b5;
  font-size: 15px;
  font-weight: 600;
}
.topbar h1 { font-size: 17px; font-weight: 400; color: #fff; }
.addtag { margin-left: 34px; }
.toggle { display: flex; align-items: center; gap: 11px; margin-left: auto; color: #c3c7d6; }
.toggle input {
  appearance: none; width: 49px; height: 25px; margin: 0; border-radius: 13px;
  background: #353637; border: 2px solid #48494b; display: flex; align-items: center;
}
.toggle input::before { content: ""; width: 21px; height: 21px; border-radius: 50%; background: #a9abb0; }
.share { width: 74px; height: 37px; margin: 0 45px 0 25px; color: #fff; }
.history { margin-left: 36px; }
.icon svg { width: 17px; height: 17px; }
.icon.more { margin: 0 36px 0 44px; }
.more svg { width: 18px; height: 6px; }
.gh {
  align-self: stretch; display: flex; align-items: center; margin-top: -2px; padding: 0 26px 0 25px;
  border-left: 1px solid #55575a; font-family: "Open Sans", sans-serif; color: #fff;
}
.gh a { display: flex; align-items: center; justify-content: center; height: 33px; }
.star { width: 76px; gap: 4px; background: #20272e; border-right: 1px solid #3b434b; border-radius: 4px 0 0 4px; }
.star svg { width: 20px; height: 20px; }
.count { width: 68px; background: #0d1117; border-radius: 0 4px 4px 0; }
.views {
  position: absolute; left: 50%; top: 61px; transform: translateX(-50%);
  display: flex; padding: 5px; border-radius: 5px; background: #525456; color: #c3c7d6;
}
.views button { height: 32px; padding: 0 15px; border-radius: 5px; }
.views .on { background: #2d2e2e; color: #fff; }

/* diagram canvas */
.canvas {
  position: relative;
  flex: 1;
  overflow: hidden;
  background-color: #2d2e2e;
  background-image:
    radial-gradient(circle at 1px 1px, #3e4040 1px, transparent 1px),
    radial-gradient(circle at 7px 1px, #373939 1px, transparent 1px),
    radial-gradient(circle at 1px 7px, #373939 1px, transparent 1px),
    radial-gradient(circle at 7px 7px, #333535 1px, transparent 1px);
  background-size: 13px 13px;
}
.world { position: absolute; left: -250px; top: -190px; width: 1920px; height: 1080px; }
.edges { position: absolute; left: 0; top: 0; width: 1920px; height: 1080px; pointer-events: none; }
.solid { fill: none; stroke: #2b7d53; stroke-width: 1; }
.dashed { fill: none; stroke: #2f8a5c; stroke-width: 1; stroke-dasharray: 3 2; }
.edges text { text-anchor: middle; font-size: 4px; }
.count-labels text { font-weight: 600; fill: #eceef4; stroke: #2d2e2e; stroke-width: 1; paint-order: stroke; }
.port-labels text { fill: #a29fc0; }
.port-labels tspan { fill: #ff4949; }
.sticky {
  position: absolute;
  padding: 2px 3px;
  border: 1px solid #5a4c1e;
  border-radius: 1px;
  background: #51431f;
  color: #fff;
  font-size: 11px;
  line-height: 16px;
  font-weight: 600;
}
.sticky.red { background: #642a2e; border-color: #70292f; }
.sticky.green { background: #1f4c33; border-color: #1f5738; }
.node {
  position: absolute;
  display: flex;
  align-items: center;
  justify-content: center;
  width: 33px;
  height: 33px;
  border: 1px solid #2f7f57;
  border-radius: 3px;
  background: #414244;
}
.node > svg { width: 14px; height: 14px; }
.node i { position: absolute; right: 2px; bottom: 1px; display: flex; align-items: center; gap: 1px; color: #31a76a; font: 600 5px/6px Inter, sans-serif; }
.node i svg { width: 6px; height: 5px; }
.node p {
  position: absolute; top: 33px; left: 50%; width: 48px; margin-left: -24px;
  text-align: center; color: #fff; font-size: 5px; line-height: 7px; font-weight: 700;
}
.node small { display: block; font-size: 4px; font-weight: 400; color: #c4c6cc; }
.node.trigger { border-radius: 12px 3px 3px 12px; }
.node.wide { width: 84px; justify-content: flex-start; padding-left: 9px; gap: 5px; }
.node.wide b { color: #fff; font-size: 5px; font-weight: 700; white-space: nowrap; }
.node.sub { width: 26px; height: 26px; border-radius: 50%; background: #2b2c39; }
.node.sub > svg { width: 10px; height: 10px; }
.node.sub i { left: 0; right: 0; bottom: 1px; justify-content: center; }
.node.sub p { top: 27px; line-height: 6px; }
.addnode { position: absolute; top: 20px; right: 20px; width: 52px; height: 53px; }
.addnode svg { width: 20px; height: 20px; }
.controls { position: absolute; left: 20px; bottom: 19px; display: flex; gap: 16px; }
.controls button { width: 52px; height: 52px; background: #2d2e2e; }
.controls svg { width: 20px; height: 20px; }
.run { position: absolute; left: 50%; bottom: 19px; transform: translateX(-50%); display: flex; gap: 12px; }
.run button { width: 53px; height: 52px; border-radius: 5px; background: #ff6f5c; color: #fff; }
.run .test { width: 197px; gap: 8px; font-size: 18px; font-weight: 500; }
.run svg { width: 20px; height: 20px; }

/* desktop taskbar */
.taskbar {
  display: grid;
  grid-template-columns: 1fr auto 1fr;
  align-items: center;
  height: 60px;
  border-top: 1px solid #42484b;
  background: linear-gradient(90deg, #201f22, #1b2430 20%, #212326 33%, #1c2631 45%, #20262c 70%, #1e272c);
  color: #fff;
  font-family: "Open Sans", "Noto Sans", sans-serif;
  font-size: 14px;
  line-height: 20px;
}
.taskbar p { padding-bottom: 2px; }
.taskbar p span { display: block; }
.widget { display: flex; align-items: center; gap: 19px; padding-left: 34px; }
.widget p span { color: #c5c8cb; }
.nba { position: relative; display: flex; }
.nba svg { width: 12px; height: 27px; }
.taskbar em {
  position: absolute; right: -12px; top: -8px; min-width: 20px; height: 20px; padding: 0 2px;
  border-radius: 10px; background: #4cc2ff; color: #111; font-size: 13px; font-style: normal; text-align: center; line-height: 20px;
}
.taskbar .nba em { background: #ff99a4; right: -14px; }
.dock { display: flex; align-items: center; gap: 25px; }
.dock button { position: relative; width: 30px; height: 30px; }
.dock button > svg { width: 30px; height: 30px; }
.dock button > em { right: -6px; }
.search {
  display: flex; align-items: center; width: 275px; height: 40px; padding: 0 8px 0 13px;
  margin: 0 -10px 0 -9px;
  border: 1px solid #53575c; border-radius: 20px; background: linear-gradient(90deg, #3f3e41, #39414b);
}
.mag { width: 20px; height: 20px; }
.search input { flex: 1; min-width: 0; margin-left: 13px; font-size: 16px; }
.search input::placeholder { color: #d2d4d6; opacity: 1; }
.art { width: 57px; height: 36px; }
.open::after { content: ""; position: absolute; left: 11px; bottom: -9px; width: 8px; height: 4px; border-radius: 2px; background: #9a9da0; }
.focus::before { content: ""; position: absolute; inset: -10px; border: 1px solid #394046; border-radius: 5px; background: #2e353b; z-index: 0; }
.focus svg { position: relative; }
.focus::after { left: 5px; width: 20px; background: #4cc2ff; }
.taskbar em.k { background: #ef6c00; color: #ffe6cc; }
.taskbar em.dark { background: #050505; }
.tray { display: flex; align-items: center; justify-content: flex-end; padding-right: 24px; }
.tray > button svg { width: 14px; height: 14px; }
.cloud { width: 22px; height: 16px; margin: 0 23px 0 22px; }
.lang { text-align: center; margin-right: 22px; }
.sys { width: 20px; height: 20px; margin-right: 9px; }
.clock { margin-left: 12px; text-align: right; font-size: 15px; }
```
